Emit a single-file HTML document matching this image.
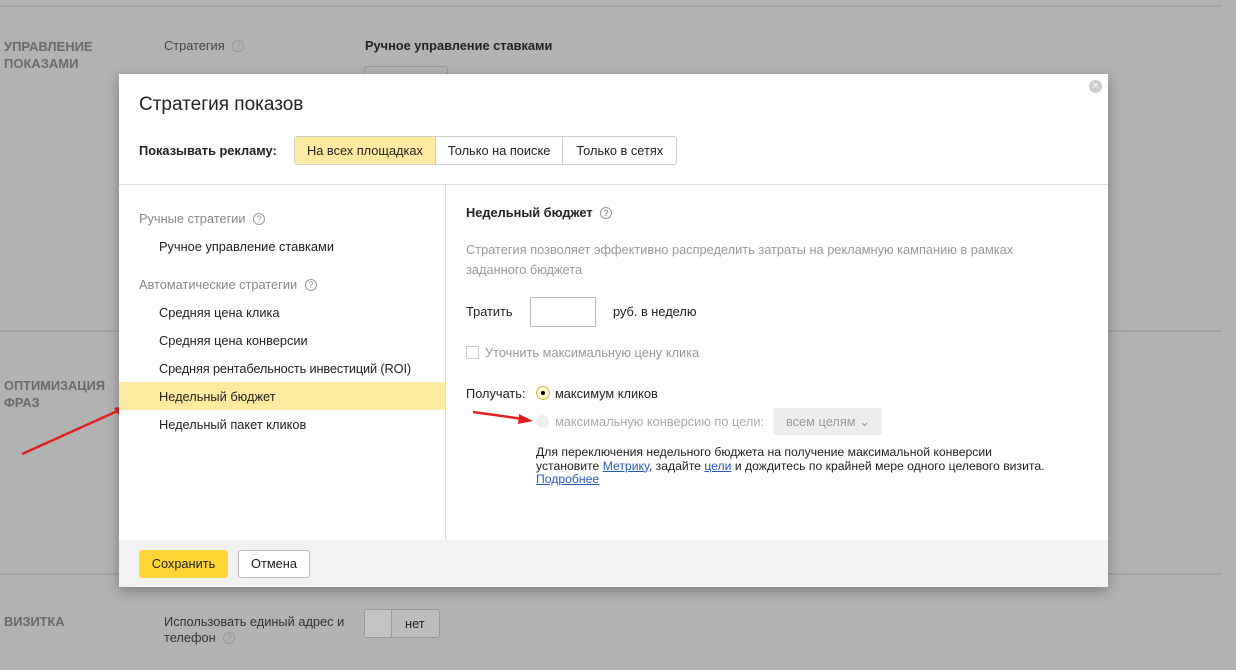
<!DOCTYPE html><html><head><meta charset="utf-8"><style>
body{margin:0;width:1236px;height:670px;background:#b2b2b2;font-family:"Liberation Sans",sans-serif;position:relative;overflow:hidden;font-size:12.8px;color:#222}
.a{position:absolute}
.hl{position:absolute;left:0;width:1222px;height:2px;background:#a3a3a3}
.q{display:inline-block;width:10px;height:10px;border:1px solid #999;border-radius:50%;font-size:9px;line-height:10px;text-align:center;color:#999;vertical-align:1px;margin-left:4px}
.m{position:absolute;left:119px;top:74px;width:989px;height:513px;background:#fff;box-shadow:0 4px 12px rgba(0,0,0,.3)}
.lk{color:#2a5bb8;text-decoration:underline}
</style></head><body>
<div class="hl" style="top:5px"></div>
<div class="hl" style="top:330px"></div>
<div class="hl" style="top:573px"></div>
<div class="a" style="left:4px;top:38px;font-weight:bold;color:#6a6a6a;font-size:13px;line-height:17px">УПРАВЛЕНИЕ<br>ПОКАЗАМИ</div>
<div class="a" style="left:164px;top:38px;color:#444">Стратегия <span class="q">?</span></div>
<div class="a" style="left:365px;top:38px;font-weight:bold;color:#222">Ручное управление ставками</div>
<div class="a" style="left:364px;top:66px;width:82px;height:10px;border:1px solid #999;border-bottom:0;border-radius:3px 3px 0 0"></div>
<div class="a" style="left:4px;top:377px;font-weight:bold;color:#6a6a6a;line-height:17px">ОПТИМИЗАЦИЯ<br>ФРАЗ</div>
<div class="a" style="left:4px;top:614px;font-weight:bold;color:#6a6a6a">ВИЗИТКА</div>
<div class="a" style="left:164px;top:614px;color:#333;line-height:16px">Использовать единый адрес и<br>телефон <span class="q">?</span></div>
<div class="a" style="left:364px;top:609px;width:74px;height:27px;border:1px solid #999;border-radius:3px;background:#bdbdbd"><div style="width:26px;height:27px;border-right:1px solid #999;background:#c4c4c4"></div><span class="a" style="left:40px;top:6px">нет</span></div>
<svg class="a" style="left:18px;top:400px" width="115" height="60"><line x1="4" y1="54" x2="104" y2="9" stroke="#e02020" stroke-width="2.5"/><polygon points="110,5 96,8 102,17" fill="#e02020"/></svg>

<div class="m">
<div class="a" style="right:6px;top:6px;width:13px;height:13px;border-radius:50%;background:#ccc;color:#fff;font-size:11px;line-height:13px;text-align:center">×</div>
<div class="a" style="left:20px;top:20px;font-size:19px;color:#222">Стратегия показов</div>
<div class="a" style="left:20px;top:69px;font-weight:bold">Показывать рекламу:</div>
<div class="a" style="left:175px;top:62px;height:27px;display:flex;border:1px solid #ccc;border-radius:3px;line-height:27px">
<div style="background:#ffeba0;padding:0 12px;border-right:1px solid #ccc">На всех площадках</div>
<div style="padding:0 12px;border-right:1px solid #ccc">Только на поиске</div>
<div style="padding:0 13px">Только в сетях</div></div>
<div class="a" style="left:0;top:110px;width:989px;height:1px;background:#ddd"></div>
<div class="a" style="left:326px;top:111px;width:1px;height:355px;background:#ddd"></div>
<div class="a" style="left:20px;top:137px;color:#888">Ручные стратегии <span class="q">?</span></div>
<div class="a" style="left:40px;top:165px">Ручное управление ставками</div>
<div class="a" style="left:20px;top:203px;color:#888">Автоматические стратегии <span class="q">?</span></div>
<div class="a" style="left:40px;top:231px">Средняя цена клика</div>
<div class="a" style="left:40px;top:259px">Средняя цена конверсии</div>
<div class="a" style="left:40px;top:287px;letter-spacing:-0.15px">Средняя рентабельность инвестиций (ROI)</div>
<div class="a" style="left:0;top:308px;width:326px;height:28px;background:#ffeba0"></div>
<div class="a" style="left:40px;top:315px">Недельный бюджет</div>
<div class="a" style="left:40px;top:343px">Недельный пакет кликов</div>

<div class="a" style="left:347px;top:131px;font-weight:bold">Недельный бюджет <span class="q">?</span></div>
<div class="a" style="left:347px;top:166px;color:#999;line-height:20px;width:580px">Стратегия позволяет эффективно распределить затраты на рекламную кампанию в рамках заданного бюджета</div>
<div class="a" style="left:347px;top:230px">Тратить</div>
<div class="a" style="left:411px;top:223px;width:64px;height:28px;border:1px solid #bbb"></div>
<div class="a" style="left:494px;top:230px">руб. в неделю</div>
<div class="a" style="left:347px;top:272px;width:11px;height:11px;border:1px solid #ccc"></div>
<div class="a" style="left:366px;top:271px;color:#999">Уточнить максимальную цену клика</div>
<div class="a" style="left:347px;top:312px">Получать:</div>
<div class="a" style="left:417px;top:312px;width:12px;height:12px;border-radius:50%;border:1px solid #e0b84a;background:#fff7d0"><div style="width:4px;height:4px;background:#000;border-radius:50%;margin:4px"></div></div>
<div class="a" style="left:436px;top:312px">максимум кликов</div>
<div class="a" style="left:417px;top:341px;width:13px;height:13px;border-radius:50%;background:#eee"></div>
<div class="a" style="left:436px;top:340px;color:#aaa">максимальную конверсию по цели:</div>
<div class="a" style="left:654px;top:334px;width:109px;height:27px;background:#eee;border-radius:3px;color:#999;line-height:27px;text-indent:13px">всем целям ⌄</div>
<div class="a" style="left:417px;top:372px;font-size:12.2px;line-height:13.5px;color:#222;width:600px">Для переключения недельного бюджета на получение максимальной конверсии<br>установите <span class="lk">Метрику</span>, задайте <span class="lk">цели</span> и дождитесь по крайней мере одного целевого визита.<br><span class="lk">Подробнее</span></div>
<svg class="a" style="left:352px;top:334px" width="65" height="18"><line x1="2" y1="4" x2="52" y2="11" stroke="#e02020" stroke-width="2.5"/><polygon points="62,13 48,6 47,16" fill="#e02020"/></svg>

<div class="a" style="left:0;top:466px;width:989px;height:47px;background:#f2f2f2"></div>
<div class="a" style="left:20px;top:476px;width:89px;height:28px;background:#ffd633;border-radius:3px;text-align:center;line-height:28px">Сохранить</div>
<div class="a" style="left:119px;top:476px;width:70px;height:26px;border:1px solid #bbb;background:#fff;border-radius:3px;text-align:center;line-height:26px">Отмена</div>
</div>
</body></html>
